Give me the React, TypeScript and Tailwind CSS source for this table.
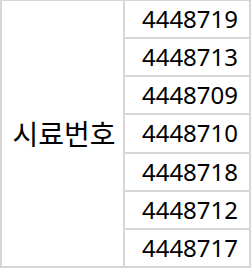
const SAMPLE_NUMBERS = ['4448719', '4448713', '4448709', '4448710', '4448718', '4448712', '4448717']

export default function App() {
  return (
    <div className="h-[269px] w-[252px] bg-white">
      <div
        className="flex h-[268px] w-[251px] border-t border-r-2 border-b-2 border-l-2 border-[#d6d6d6] leading-none text-black"
        style={{ fontFamily: '"Noto Sans", "Noto Sans CJK KR", sans-serif' }}
      >
        {/* label cell spanning all rows */}
        <div className="flex w-[123px] shrink-0 items-center justify-center border-r-2 border-[#d6d6d6] pl-[3px] text-[28px]">
          시료번호
        </div>
        <div className="flex flex-1 flex-col text-[24px]">
          {SAMPLE_NUMBERS.map((num, i) => (
            <div
              key={num}
              className={`flex flex-1 items-center justify-center pl-[6px] ${
                i < SAMPLE_NUMBERS.length - 1 ? 'border-b-2 border-[#d6d6d6]' : ''
              }`}
            >
              {num}
            </div>
          ))}
        </div>
      </div>
    </div>
  )
}
